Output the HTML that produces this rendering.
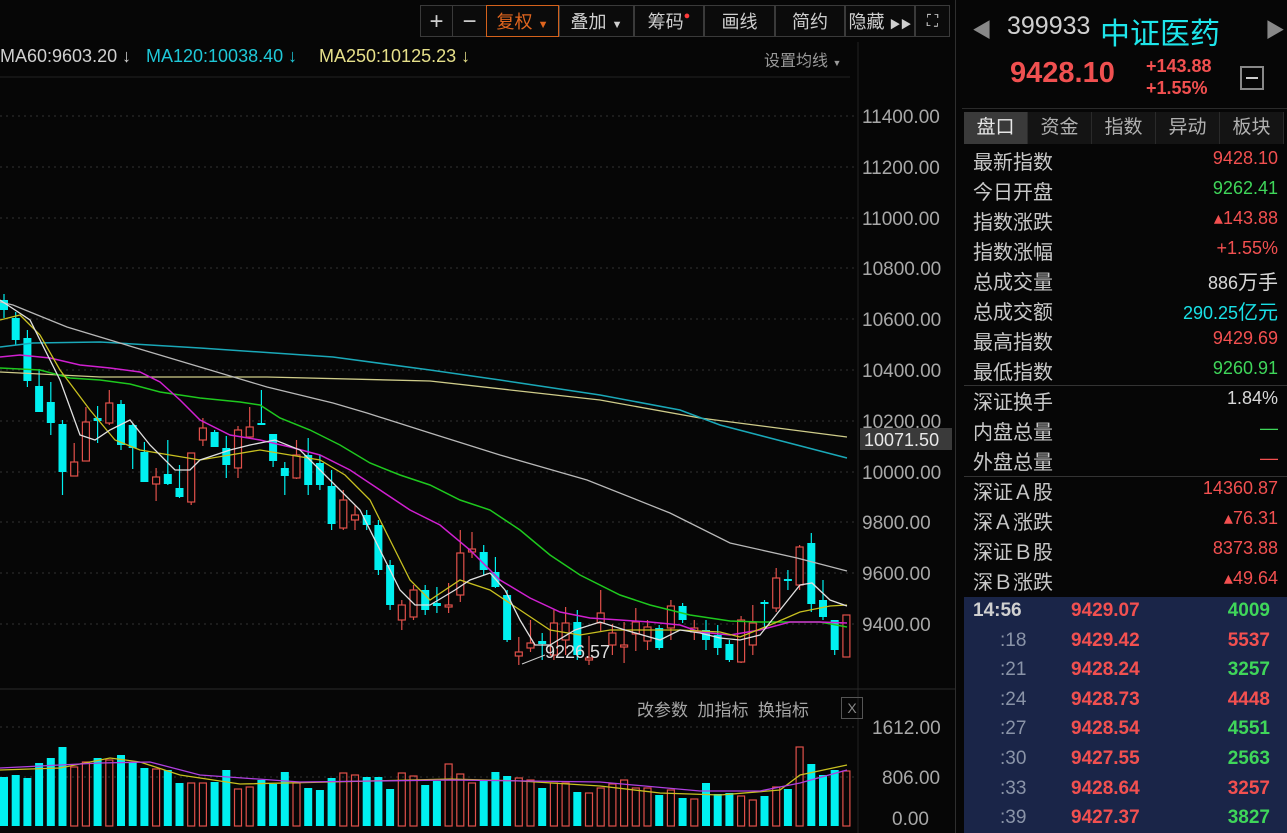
<!DOCTYPE html>
<html><head><meta charset="utf-8"><style>
body{margin:0;width:1287px;height:833px;background:#060606;overflow:hidden;font-family:"Liberation Sans","Noto Sans CJK SC",sans-serif;position:relative}
.a{position:absolute;white-space:nowrap}
.tb{position:absolute;top:5px;height:32px;border:1px solid #3a3a3a;background:#0b0b0b;color:#cfcfcf;font-size:18px;line-height:32px;text-align:center;box-sizing:border-box}
.rl{position:absolute;left:973px;font-size:20px;color:#c9c9c9}
.rv{position:absolute;right:9px;font-size:18px;text-align:right}
.r{color:#f25050}.g{color:#3fd65a}.w{color:#d8d8d8}.cy{color:#19e0e6}
.tab{position:absolute;top:112px;height:32px;width:63px;font-size:19px;color:#b0b0b0;text-align:center;line-height:32px;border-right:1px solid #2a2a2a;background:#141414}
</style></head><body>
<svg id="s" class="a" style="left:0;top:0" width="960" height="833"></svg>

<div class="tb" style="left:420px;width:33px;font-size:24px">+</div>
<div class="tb" style="left:452px;width:35px;font-size:24px">−</div>
<div class="tb" style="left:486px;width:73px;border-color:#d4621c;color:#e0651e">复权 <span style="font-size:11px">▼</span></div>
<div class="tb" style="left:559px;width:75px">叠加 <span style="font-size:11px">▼</span></div>
<div class="tb" style="left:634px;width:70px">筹码<span style="color:#ff3b3b;font-size:11px;vertical-align:top;line-height:20px">●</span></div>
<div class="tb" style="left:704px;width:71px">画线</div>
<div class="tb" style="left:775px;width:70px">简约</div>
<div class="tb" style="left:845px;width:70px">隐藏 <span style="font-size:11px">▶▶</span></div>
<div class="tb" style="left:915px;width:35px;font-size:16px">⛶</div>

<div class="a" style="left:0;top:46px;font-size:18px;color:#d0d0d0">MA60:9603.20 ↓</div>
<div class="a" style="left:146px;top:46px;font-size:18px;color:#1fc8d8">MA120:10038.40 ↓</div>
<div class="a" style="left:319px;top:46px;font-size:18px;color:#e6e08a">MA250:10125.23 ↓</div>
<div class="a" style="left:764px;top:47px;font-size:16px;color:#9a9a9a">设置均线 <span style="font-size:9px">▼</span></div>
<div class="a" style="left:637px;top:696px;font-size:17px;color:#a5a5a5">改参数 &nbsp;加指标 &nbsp;换指标</div>
<div class="a" style="left:841px;top:697px;width:20px;height:20px;border:1px solid #555;color:#888;font-size:14px;text-align:center;line-height:20px">X</div>

<div style="position:absolute;left:955px;top:0;width:1px;height:833px;background:#2e2e2e"></div>
<div class="a" style="left:972px;top:14px;font-size:20px;color:#888">◀</div>
<div class="a" style="left:1007px;top:12px;font-size:25px;color:#cfcfcf">399933</div>
<div class="a cy" style="left:1100px;top:9px;font-size:30px;color:#1ee5ea">中证医药</div>
<div class="a" style="left:1265px;top:14px;font-size:20px;color:#888">▶</div>
<div class="a r" style="left:1010px;top:57px;font-size:29px;font-weight:bold;color:#f05050">9428.10</div>
<div class="a r" style="left:1146px;top:55px;font-size:18px;line-height:22px;font-weight:bold">+143.88<br>+1.55%</div>
<div class="a" style="left:1240px;top:66px;width:24px;height:24px;border:2px solid #888;box-sizing:border-box"><div style="margin:9px 4px;height:2px;background:#ccc"></div></div>
<div style="position:absolute;left:962px;top:108px;width:325px;height:1px;background:#2a2a2a"></div>
<div class="tab" style="left:964px;background:#3a3a3a;color:#e8e8e8">盘口</div>
<div class="tab" style="left:1028px">资金</div>
<div class="tab" style="left:1092px">指数</div>
<div class="tab" style="left:1156px">异动</div>
<div class="tab" style="left:1220px">板块</div>

<div class="rl" style="top:146px">最新指数</div><div class="rv r" style="top:148px">9428.10</div>
<div class="rl" style="top:176px">今日开盘</div><div class="rv g" style="top:178px">9262.41</div>
<div class="rl" style="top:206px">指数涨跌</div><div class="rv r" style="top:208px">▴143.88</div>
<div class="rl" style="top:236px">指数涨幅</div><div class="rv r" style="top:238px">+1.55%</div>
<div class="rl" style="top:266px">总成交量</div><div class="rv w" style="top:266px">886<span style="font-size:20px">万手</span></div>
<div class="rl" style="top:296px">总成交额</div><div class="rv cy" style="top:296px">290.25<span style="font-size:20px">亿元</span></div>
<div class="rl" style="top:326px">最高指数</div><div class="rv r" style="top:328px">9429.69</div>
<div class="rl" style="top:356px">最低指数</div><div class="rv g" style="top:358px">9260.91</div>
<div style="position:absolute;left:964px;top:385px;width:323px;height:1px;background:#333"></div>
<div class="rl" style="top:386px">深证换手</div><div class="rv w" style="top:388px">1.84%</div>
<div class="rl" style="top:416px">内盘总量</div><div class="rv g" style="top:418px">—</div>
<div class="rl" style="top:446px">外盘总量</div><div class="rv r" style="top:448px">—</div>
<div style="position:absolute;left:964px;top:476px;width:323px;height:1px;background:#333"></div>
<div class="rl" style="top:476px">深证Ａ股</div><div class="rv r" style="top:478px">14360.87</div>
<div class="rl" style="top:506px">深Ａ涨跌</div><div class="rv r" style="top:508px">▴76.31</div>
<div class="rl" style="top:536px">深证Ｂ股</div><div class="rv r" style="top:538px">8373.88</div>
<div class="rl" style="top:566px">深Ｂ涨跌</div><div class="rv r" style="top:568px">▴49.64</div>

<div style="position:absolute;left:964px;top:597px;width:323px;height:236px;background:#1a2548"></div>
<div id="tk"></div>

<script>
const NS="http://www.w3.org/2000/svg",s=document.getElementById('s');
function el(t,a){const e=document.createElementNS(NS,t);for(const k in a)e.setAttribute(k,a[k]);s.appendChild(e);return e}
function tx(x,y,t,c,fs){const e=el('text',{x:x,y:y,fill:c,'font-size':fs,'font-family':'Liberation Sans, sans-serif'});e.textContent=t}
el('line',{x1:0,y1:77,x2:850,y2:77,stroke:'#222'});
el('line',{x1:858,y1:42,x2:858,y2:833,stroke:'#222'});
el('line',{x1:0,y1:689,x2:955,y2:689,stroke:'#2a2a2a'});
const lv=[[11400,116],[11200,167],[11000,218],[10800,268],[10600,319],[10400,370],[10200,421],[10000,472],[9800,522],[9600,573],[9400,624]];
lv.forEach(([v,y])=>{el('line',{x1:0,y1:y,x2:858,y2:y,stroke:'#333','stroke-dasharray':'2,4'});tx(862,y+7,v.toFixed(2),'#a8a8a8',19)});
[[1612,727],[806,777]].forEach(([v,y])=>el('line',{x1:0,y1:y,x2:858,y2:y,stroke:'#333','stroke-dasharray':'2,4'}));
tx(872,734,'1612.00','#a8a8a8',19);tx(882,784,'806.00','#a8a8a8',19);tx(892,825,'0.00','#a8a8a8',19);
el('rect',{x:860,y:428,width:92,height:22,fill:'#3a3a3a'});tx(864,446,'10071.50','#e8e8e8',18);
const C=[['c',300,310,294,318],['c',318,340,312,345],['c',338,381,330,387],['c',386,412,369,412],['c',402,423,382,435],['c',424,472,420,495],['r',462,476,443,476],['r',422,461,407,461],['c',418,421,406,443],['r',403,423,390,425],['c',404,445,400,450],['c',425,448,424,469],['c',452,482,442,482],['r',477,484,468,501],['c',474,484,440,485],['c',488,497,465,498],['r',453,502,453,505],['r',428,440,418,446],['c',432,447,430,447],['c',448,465,436,478],['r',430,468,426,478],['r',427,437,407,438],['c',423,424,390,424],['c',434,461,434,467],['c',468,476,462,495],['r',455,478,440,479],['c',455,485,438,495],['c',463,485,455,490],['c',486,524,470,530],['r',500,528,490,530],['r',515,520,505,530],['c',515,525,510,530],['c',525,570,520,575],['c',565,605,560,610],['r',605,620,600,630],['r',590,617,585,620],['c',590,610,585,615],['c',603,606,587,613],['r',605,607,583,613],['r',553,595,530,602],['r',549,552,532,558],['c',552,570,545,575],['c',572,587,557,588],['c',595,640,590,642],['r',652,656,637,665],['r',643,648,620,652],['c',641,644,633,660],['r',623,655,610,660],['r',623,640,607,655],['c',622,655,610,660],['r',658,660,636,665],['r',613,623,590,632],['r',633,645,624,655],['r',645,647,622,663],['r',622,634,608,651],['r',627,641,620,650],['c',628,648,625,650],['r',606,628,600,640],['c',606,620,603,623],['r',628,632,620,640],['c',630,640,620,650],['c',635,648,625,655],['c',644,660,640,662],['r',620,662,616,663],['r',623,645,605,655],['c',602,604,600,628],['r',578,608,568,612],['c',579,580,570,590],['r',547,585,545,590],['c',543,604,533,612],['c',600,617,580,620],['c',620,650,620,655],['r',615,657,615,657]];
const V=[777,775,778,763,758,747,767,762,758,760,755,762,768,769,770,783,783,783,782,770,789,787,780,784,772,783,788,790,778,773,775,777,777,789,773,776,785,781,764,774,783,781,772,776,778,780,788,783,783,792,793,788,784,780,788,788,795,790,798,799,783,794,793,796,800,796,787,789,747,764,775,770,771];
C.forEach((c,i)=>{const x=4+11.7*i,col=c[0]=='c'?'#00f0f0':'#e0504a';
 el('line',{x1:x,y1:c[3],x2:x,y2:c[4],stroke:col,'stroke-width':1.2});
 const h=Math.max(2,c[2]-c[1]);
 if(c[0]=='c')el('rect',{x:x-4,y:c[1],width:8,height:h,fill:col});
 else el('rect',{x:x-3.5,y:c[1],width:7,height:h,fill:'#060606',stroke:col,'stroke-width':1.2});
 const vy=V[i];
 if(c[0]=='c')el('rect',{x:x-4,y:vy,width:8,height:826-vy,fill:'#00f0f0'});
 else el('rect',{x:x-3.5,y:vy,width:7,height:826-vy,fill:'none',stroke:'#e0504a','stroke-width':1.2});
});
function pl(p,c,w){el('polyline',{points:p,fill:'none',stroke:c,'stroke-width':w||1.3})}
pl('0,372 100,377 267,377 430,381 600,400 700,418 847,437','#cfcc8a');
pl('0,347 33,343 100,342 200,348 333,357 430,370 500,380 600,395 680,410 720,425 847,458','#1aa8b8',1.5);
pl('0,302 13,305 30,312 67,327 133,347 200,367 267,387 333,403 367,413 430,433 500,455 587,480 670,513 730,543 797,558 847,571','#b8b8b8');
pl('0,368 40,370 70,378 100,380 130,384 160,392 200,398 240,402 260,405 280,418 310,430 340,445 370,463 400,475 430,485 460,500 490,510 520,530 550,555 580,575 620,595 650,605 690,615 730,621 760,622 790,622 820,622 847,627','#1ec81e',1.5);
pl('0,357 20,355 50,358 80,365 110,368 140,372 160,382 180,400 200,420 230,435 260,440 290,447 320,455 350,470 380,490 410,510 440,525 470,550 500,580 530,598 560,612 590,618 620,620 650,622 680,625 700,632 730,635 760,630 790,622 820,622 847,623','#d020d0',1.5);
pl('0,320 20,315 40,335 60,370 90,410 115,440 140,450 170,455 200,460 230,455 260,450 290,455 320,460 345,475 370,500 390,540 410,580 430,600 460,580 490,590 520,610 550,630 580,635 610,630 640,630 680,630 720,632 740,637 770,625 800,612 830,606 847,605','#c8c020');
pl('0,300 30,320 60,380 80,435 95,440 110,430 130,420 150,445 175,470 190,470 200,460 215,455 230,450 250,445 275,440 300,450 320,470 340,490 360,510 385,560 400,590 415,605 430,605 455,590 470,580 490,573 505,590 520,620 535,645 550,645 575,630 600,622 625,630 660,640 680,630 700,633 720,638 740,640 760,635 780,610 800,585 812,583 830,600 847,606','#e0e0e0');
pl('0,770 60,768 110,758 140,762 180,775 240,784 330,782 450,779 520,781 600,786 660,793 720,795 780,790 800,775 847,765','#c8c020');
pl('0,768 100,763 150,762 200,775 300,782 450,780 600,782 700,791 760,791 800,783 847,770','#b040e0');
el('line',{x1:522,y1:664,x2:545,y2:655,stroke:'#ccc'});tx(545,658,'9226.57','#dcdcdc',18);
const T=[['14:56','9429.07','4009','g'],[':18','9429.42','5537','r'],[':21','9428.24','3257','g'],[':24','9428.73','4448','r'],[':27','9428.54','4551','g'],[':30','9427.55','2563','g'],[':33','9428.64','3257','r'],[':39','9427.37','3827','g']];
let h='';T.forEach((t,i)=>{const y=600+i*29.6;
h+=`<div class="a" style="top:${y}px;left:${i?1000:973}px;font-size:19px;color:${i?'#8a94a8':'#d0d0d0'};font-weight:${i?'normal':'bold'}">${t[0]}</div>
<div class="a r" style="top:${y}px;left:1071px;font-size:19px;font-weight:bold">${t[1]}</div>
<div class="a ${t[3]}" style="top:${y}px;right:17px;font-size:19px;font-weight:bold">${t[2]}</div>`});
document.getElementById('tk').innerHTML=h;
</script>
</body></html>
